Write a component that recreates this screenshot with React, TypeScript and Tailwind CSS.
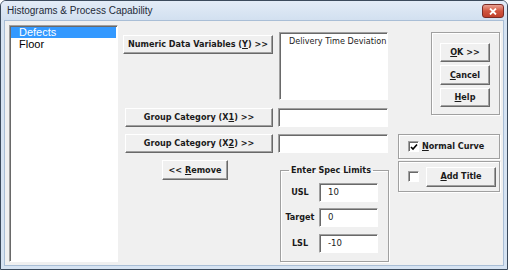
import React from 'react'

const ui = { fontFamily: '"Liberation Sans", "Noto Sans", sans-serif' }
const tah = { fontFamily: '"DejaVu Sans Condensed", "DejaVu Sans", sans-serif' }

const raised =
  'border border-t-white border-l-white border-b-[#696969] border-r-[#696969] shadow-[inset_-1px_-1px_0_#a0a0a0] bg-[#f0f0f0]'
const sunken =
  'border border-t-[#a0a0a0] border-l-[#a0a0a0] border-b-white border-r-white shadow-[inset_1px_1px_0_#696969] bg-white'
const etched = 'border border-[#a0a0a0] shadow-[inset_1px_1px_0_#fff,1px_1px_0_#fff]'

function Btn({
  children,
  className = ''
}: {
  children: React.ReactNode
  className?: string
}) {
  return (
    <div
      className={`${raised} flex items-center justify-center whitespace-nowrap text-[9px] font-bold text-[#1a1a1a] ${className}`}
      style={tah}
    >
      <span className="leading-none">{children}</span>
    </div>
  )
}

function Box({ className = '', children }: { className?: string; children?: React.ReactNode }) {
  return (
    <div className={`${sunken} text-[9.5px] text-[#222] ${className}`} style={tah}>
      {children}
    </div>
  )
}

function Check({ checked }: { checked?: boolean }) {
  return (
    <div className={`${sunken} w-[11px] h-[11px] flex items-center justify-center`}>
      {checked && (
        <svg width="8" height="8" viewBox="0 0 8 8">
          <path d="M1 4 L3 6 L7 1.5" stroke="#000" strokeWidth="1.6" fill="none" />
        </svg>
      )}
    </div>
  )
}

export default function App() {
  return (
    <div className="w-[509px] h-[271px] bg-white">
      <div className="w-[508px] h-[270px] rounded-t-[6px] border border-[#3b4a5c] bg-[#d6e3f2] flex flex-col">
        <div className="h-[19px] flex items-center justify-between pl-[6px] pr-[3px] bg-gradient-to-b from-[#e3ecf7] to-[#d2e0f0] rounded-t-[5px]">
          <span className="text-[10px] text-[#1e2a38]" style={ui}>
            Histograms &amp; Process Capability
          </span>
          <div className="w-[22px] h-[14px] mt-[1px] rounded-[3px] border border-[#7a2b25] bg-gradient-to-b from-[#e8a093] via-[#d0553f] to-[#c0402c] flex items-center justify-center">
            <svg width="8" height="7" viewBox="0 0 8 7">
              <path d="M1 0.5 L7 6.5 M7 0.5 L1 6.5" stroke="#fff" strokeWidth="1.8" />
            </svg>
          </div>
        </div>
        <div className="mx-[3px] mb-[3px] flex-1 border border-[#a9bed6] bg-[#f0f0f0] flex items-start pl-[4px] pt-[4px]">
          {/* left listbox */}
          <div className={`${sunken} w-[109px] h-[237px] pt-[1px] px-[1px]`} style={ui}>
            <div className="h-[11px] bg-[#3399ff] text-white text-[11px] leading-[11px] pl-[8px]">
              Defects
            </div>
            <div className="h-[12px] text-black text-[11px] leading-[12px] pl-[8px]">Floor</div>
          </div>

          {/* middle column */}
          <div className="ml-[5px] w-[266px] flex flex-col">
            <div className="mt-[7px] flex items-start">
              <Btn className="mt-[3px] w-[150px] h-[19px]">
                Numeric Data Variables (<u>Y</u>) &gt;&gt;
              </Btn>
              <Box className="ml-[6px] w-[109px] h-[68px] pl-[9px] pt-[2px] overflow-hidden whitespace-nowrap text-[9px]">
                Delivery Time Deviation
              </Box>
            </div>
            <div className="mt-[8px] flex items-start">
              <Btn className="ml-[2px] w-[148px] h-[19px]">
                Group Category (X<u>1</u>) &gt;&gt;
              </Btn>
              <Box className="ml-[5px] w-[110px] h-[19px]" />
            </div>
            <div className="mt-[7px] flex items-start">
              <Btn className="ml-[2px] w-[148px] h-[19px]">
                Group Category (X<u>2</u>) &gt;&gt;
              </Btn>
              <Box className="ml-[5px] w-[110px] h-[19px]" />
            </div>
            <div className="mt-[7px] flex items-start">
              <Btn className="ml-[39px] w-[66px] h-[20px]">
                &lt;&lt; <u>R</u>emove
              </Btn>
              <fieldset className={`${etched} ml-[52px] mt-[6px] w-[109px] h-[96px] px-0 pb-0`}>
                <legend
                  className="ml-[8px] px-[2px] text-[9px] font-bold text-[#1a1a1a] leading-none"
                  style={tah}
                >
                  Enter Spec Limits
                </legend>
                <div className="flex flex-col gap-[6px] mt-[8px]">
                  {[
                    ['USL', '10'],
                    ['Target', '0'],
                    ['LSL', '-10']
                  ].map(([l, v], i) => (
                    <div key={l} className={`flex items-center ${i === 2 ? 'mt-[1px]' : ''}`}>
                      <div
                        className="w-[38px] text-center text-[9px] font-bold text-[#1a1a1a]"
                        style={tah}
                      >
                        {l}
                      </div>
                      <Box className="w-[59px] h-[19px] pl-[8px] flex items-center">{v}</Box>
                    </div>
                  ))}
                </div>
              </fieldset>
            </div>
          </div>

          {/* right column */}
          <div className="ml-[9px] w-[102px] flex flex-col">
            <div className={`${etched} ml-[33px] mt-[7px] w-[69px] h-[83px] pl-[8px] pt-[10px] flex flex-col gap-[3px]`}>
              <Btn className="w-[50px] h-[19px]">
                <u>O</u>K &gt;&gt;
              </Btn>
              <Btn className="w-[50px] h-[20px]">
                <u>C</u>ancel
              </Btn>
              <Btn className="w-[50px] h-[19px]">
                <u>H</u>elp
              </Btn>
            </div>
            <div className={`${etched} mt-[19px] h-[25px] flex items-center pl-[9px]`}>
              <Check checked />
              <span className="ml-[3px] text-[9px] font-bold text-[#1a1a1a]" style={tah}>
                <u>N</u>ormal Curve
              </span>
            </div>
            <div className={`${etched} mt-[2px] h-[31px] flex items-center pl-[9px]`}>
              <Check />
              <Btn className="ml-[7px] w-[70px] h-[20px]">
                <u>A</u>dd Title
              </Btn>
            </div>
          </div>
        </div>
      </div>
    </div>
  )
}
